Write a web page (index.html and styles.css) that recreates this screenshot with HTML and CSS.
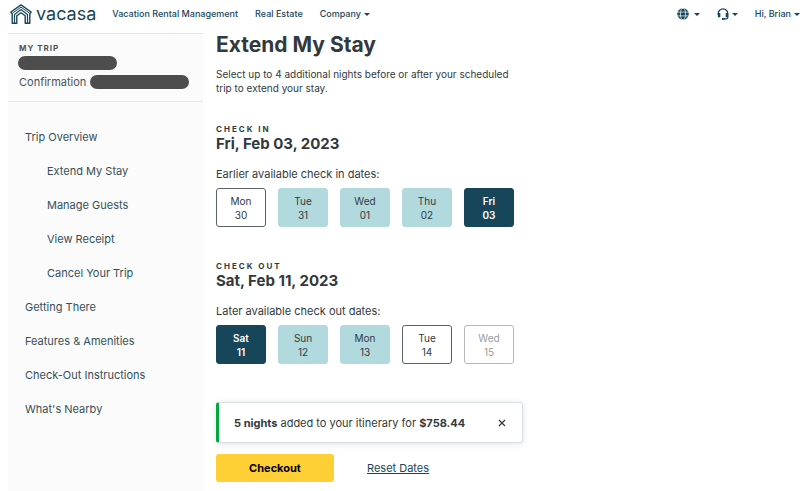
FILE: index.html
```html
<!DOCTYPE html>
<html lang="en">
<head>
  <meta charset="UTF-8">
  <meta name="viewport" content="width=device-width, initial-scale=1">
  <title>Extend My Stay | Vacasa</title>
  <link rel="stylesheet" href="styles.css">
</head>
<body>
  <header class="site-header">
    <a href="#" class="logo" aria-label="Vacasa">
      <svg class="logo-mark" viewBox="0 0 22 20" fill="none" stroke="currentColor" aria-hidden="true">
        <path d="M2.200 19.200V10L.9 8 11 .9 21.100 8l-1.300 2v9.200h-4.600v-7.400L11 8.700l-4.200 3.100v7.400z" stroke-width="1.400" stroke-linejoin="round"/>
        <path d="M4.500 19v-8.500L11 5.600l6.500 4.900V19" stroke-width="1.200"/>
        <path d="M2.600 9 11 3.200 19.400 9" stroke-width="1"/>
      </svg>
      <span class="logo-text">vacasa</span>
    </a>
    <nav class="main-nav">
      <a href="#">Vacation Rental Management</a>
      <a href="#">Real Estate</a>
      <button type="button" class="menu-button">Company <span class="caret"></span></button>
    </nav>
    <div class="user-nav">
      <button type="button" class="menu-button icon-button" aria-label="Language">
        <svg class="icon" viewBox="0 0 12 12" aria-hidden="true">
          <circle cx="6" cy="6" r="5.800" fill="currentColor"/>
          <path d="M0 4.100h12M0 7.900h12" stroke="#fff" stroke-width=".7"/>
          <ellipse cx="6" cy="6" rx="2.600" ry="5.900" fill="none" stroke="#fff" stroke-width=".7"/>
        </svg>
        <span class="caret"></span>
      </button>
      <button type="button" class="menu-button" aria-label="Support">
        <svg class="icon" viewBox="0 0 12 12" fill="none" stroke="currentColor" aria-hidden="true">
          <path d="M1.200 7V5.700a4.800 4.800 0 0 1 9.600 0V9.300a1.500 1.500 0 0 1-1.500 1.500H6" stroke-width="1.300"/>
          <path d="M2.100 5v4.200M9.900 5v4.200" stroke-width="2.400"/>
          <path d="M5 10.900h2.500" stroke-width="1.800"/>
        </svg>
        <span class="caret"></span>
      </button>
      <button type="button" class="menu-button">Hi, Brian <span class="caret"></span></button>
    </div>
  </header>

  <div class="page">
    <aside class="sidebar">
      <div class="trip">
        <div class="eyebrow">My Trip</div>
        <div class="redacted"></div>
        <div class="confirmation">Confirmation <span class="redacted"></span></div>
      </div>
      <nav>
        <ul class="trip-nav">
          <li><a href="#">Trip Overview</a>
            <ul>
              <li><a href="#">Extend My Stay</a></li>
              <li><a href="#">Manage Guests</a></li>
              <li><a href="#">View Receipt</a></li>
              <li><a href="#">Cancel Your Trip</a></li>
            </ul>
          </li>
          <li><a href="#">Getting There</a></li>
          <li><a href="#">Features &amp; Amenities</a></li>
          <li><a href="#">Check-Out Instructions</a></li>
          <li><a href="#">What's Nearby</a></li>
        </ul>
      </nav>
    </aside>

    <main class="content">
      <h1>Extend My Stay</h1>
      <p class="intro">Select up to 4 additional nights before or after your scheduled trip to extend your stay.</p>

      <section class="date-section">
        <div class="eyebrow">Check in</div>
        <h2>Fri, Feb 03, 2023</h2>
        <p class="hint">Earlier available check in dates:</p>
        <div class="dates">
          <button type="button" class="date">Mon<br>30</button>
          <button type="button" class="date added">Tue<br>31</button>
          <button type="button" class="date added">Wed<br>01</button>
          <button type="button" class="date added">Thu<br>02</button>
          <button type="button" class="date selected">Fri<br>03</button>
        </div>
      </section>

      <section class="date-section">
        <div class="eyebrow">Check out</div>
        <h2>Sat, Feb 11, 2023</h2>
        <p class="hint">Later available check out dates:</p>
        <div class="dates">
          <button type="button" class="date selected">Sat<br>11</button>
          <button type="button" class="date added">Sun<br>12</button>
          <button type="button" class="date added">Mon<br>13</button>
          <button type="button" class="date">Tue<br>14</button>
          <button type="button" class="date" disabled>Wed<br>15</button>
        </div>
      </section>

      <div class="notice">
        <span><strong>5 nights</strong> added to your itinerary for <strong>$758.44</strong></span>
        <button type="button" class="close" aria-label="Dismiss">
          <svg viewBox="0 0 8 8" stroke="currentColor" stroke-width="1.200" aria-hidden="true"><path d="M1 1l6 6M7 1 1 7"/></svg>
        </button>
      </div>

      <div class="actions">
        <button type="button" class="checkout">Checkout</button>
        <a href="#" class="reset">Reset Dates</a>
      </div>
    </main>
  </div>
</body>
</html>
```

FILE: styles.css
```css
* {
  box-sizing: border-box;
}

body {
  margin: 0;
  font-family: Inter, "Liberation Sans", sans-serif;
  font-size: 11px;
  line-height: 14px;
  color: #32393d;
  background-color: #fff;
}

h1, h2, p, ul {
  margin: 0;
  padding: 0;
}

ul {
  list-style: none;
}

button {
  font: inherit;
  color: inherit;
  cursor: pointer;
}

a {
  color: inherit;
  text-decoration: none;
}

/* header */
.site-header {
  display: flex;
  align-items: center;
  height: 33px;
  padding: 0 9px 5px 10px;
  font-size: 9px;
  font-weight: 500;
  color: #17465a;
}

.logo {
  display: flex;
  align-items: center;
  gap: 4px;
  margin-right: 16px;
}

.logo-mark {
  width: 22px;
  height: 20px;
}

.logo-text {
  font-size: 18px;
  font-weight: 400;
  line-height: 20px;
}

.main-nav {
  display: flex;
  align-items: center;
  gap: 17px;
}

.user-nav {
  display: flex;
  align-items: center;
  gap: 17px;
  margin-left: auto;
}

.menu-button {
  display: flex;
  align-items: center;
  gap: 3px;
  padding: 0;
  border: none;
  background: none;
}

.icon-button {
  gap: 5px;
}

.icon {
  width: 12px;
  height: 12px;
}

.caret {
  border-top: 3px solid currentColor;
  border-left: 3px solid transparent;
  border-right: 3px solid transparent;
}

/* layout */
.page {
  display: flex;
  gap: 13px;
  padding-left: 8px;
}

.sidebar {
  flex: 0 0 195px;
  min-height: calc(100vh - 33px);
  background-color: #fbfbfb;
  color: #355058;
}

.trip {
  padding: 8px 10px 12px;
  border-top: 1px solid #e6e6e6;
  border-bottom: 1px solid #e6e6e6;
  color: #4a5356;
}

.eyebrow {
  font-size: 8px;
  font-weight: 700;
  line-height: 12px;
  letter-spacing: 1px;
  text-transform: uppercase;
}

.trip .eyebrow {
  padding: 0 1px 2px;
}

.redacted {
  display: block;
  width: 99px;
  height: 14px;
  border-radius: 7px;
  background-color: #4d4d4d;
}

.confirmation {
  display: flex;
  align-items: center;
  gap: 4px;
  margin-top: 5px;
  padding-left: 1px;
}

.trip-nav {
  padding: 18px 17px;
}

.trip-nav a {
  display: block;
  padding: 10px 0;
}

.trip-nav ul {
  padding-left: 22px;
}

/* content */
.content {
  flex: 1;
  padding-bottom: 8px;
}

h1 {
  font-size: 21px;
  line-height: 24px;
}

.intro {
  max-width: 300px;
  margin-top: 10px;
  font-size: 10px;
}

.date-section {
  margin-top: 28px;
}

.date-section + .date-section {
  margin-top: 33px;
}

.date-section .eyebrow {
  letter-spacing: 2px;
}

h2 {
  font-size: 15px;
  line-height: 18px;
}

.hint {
  margin: 14px 0 7px;
}

.dates {
  display: flex;
  gap: 12px;
}

.date {
  width: 50px;
  padding: 5px 0 4px;
  border: 1px solid #5a6468;
  border-radius: 3px;
  background-color: #fff;
  font-size: 10px;
}

.date.added {
  border-color: #b2d9dd;
  background-color: #b2d9dd;
}

.date.selected {
  border-color: #17465a;
  background-color: #17465a;
  color: #fff;
  font-weight: 600;
}

.date:disabled {
  border-color: #b4b8ba;
  color: #999c9e;
  cursor: default;
}

.notice {
  display: flex;
  align-items: center;
  justify-content: space-between;
  max-width: 307px;
  height: 41px;
  margin-top: 38px;
  padding: 0 16px 0 15px;
  border: 1px solid #d8e0e3;
  border-left: 3px solid #00a83e;
  border-radius: 3px;
  box-shadow: 0 1px 6px rgba(0, 0, 0, 0.12);
}

.close {
  display: flex;
  padding: 0;
  border: none;
  background: none;
}

.close svg {
  width: 8px;
  height: 8px;
}

.actions {
  display: flex;
  align-items: center;
  gap: 33px;
  margin-top: 11px;
}

.checkout {
  width: 118px;
  height: 28px;
  border: none;
  border-radius: 3px;
  background-color: #ffcf36;
  color: #000;
  font-weight: 700;
}

.reset {
  color: #17465a;
  text-decoration: underline;
}
```
